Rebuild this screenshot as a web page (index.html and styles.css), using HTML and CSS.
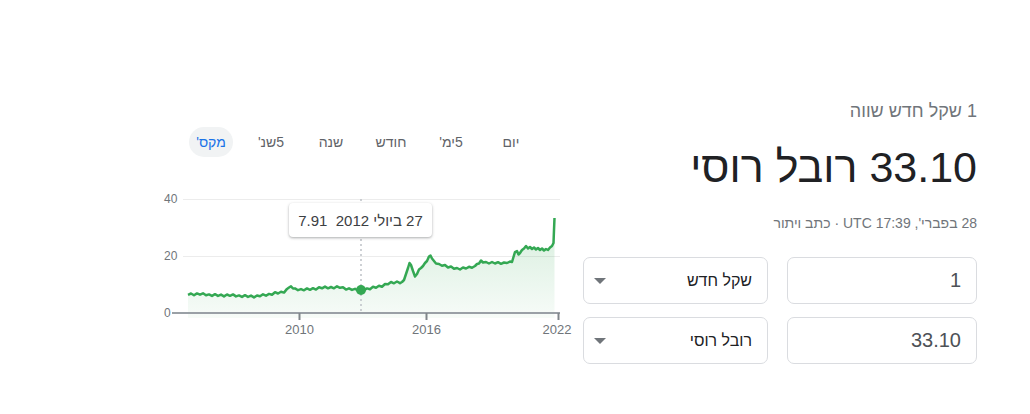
FILE: index.html
```html
<!DOCTYPE html>
<html lang="he" dir="rtl">
<head>
<meta charset="utf-8">
<title>שקל חדש לרובל רוסי</title>
<link rel="stylesheet" href="styles.css">
</head>
<body>
<div class="page">
  <section class="conv">
    <div class="conv-title">1 שקל חדש שווה</div>
    <div class="conv-result">33.10 רובל רוסי</div>
    <div class="conv-meta">28 בפברי', UTC 17:39 · <span class="disclaimer">כתב ויתור</span></div>
    <div class="conv-rows">
      <div class="conv-row">
        <div class="field num">1</div>
        <div class="field sel"><span>שקל חדש</span><span class="caret"></span></div>
      </div>
      <div class="conv-row">
        <div class="field num">33.10</div>
        <div class="field sel"><span>רובל רוסי</span><span class="caret"></span></div>
      </div>
    </div>
  </section>
  <section class="chart">
    <div class="tabs">
      <div class="tab"><span>יום</span></div>
      <div class="tab"><span>5ימ'</span></div>
      <div class="tab"><span>חודש</span></div>
      <div class="tab"><span>שנה</span></div>
      <div class="tab"><span>5שנ'</span></div>
      <div class="tab active"><span>מקס'</span></div>
    </div>
    <div class="plot">
      <svg class="plot-svg" width="405" height="150" viewBox="160 190 405 150">
        <defs>
          <linearGradient id="fillg" x1="0" y1="0" x2="0" y2="1" gradientUnits="objectBoundingBox">
            <stop offset="0" stop-color="#34a853" stop-opacity="0.2"/>
            <stop offset="1" stop-color="#34a853" stop-opacity="0.04"/>
          </linearGradient>
        </defs>
        <line x1="183" y1="199.5" x2="560" y2="199.5" class="grid"/>
        <line x1="183" y1="256.5" x2="560" y2="256.5" class="grid"/>
        <text x="164" y="203.3" class="ylab">40</text>
        <text x="164" y="260.3" class="ylab">20</text>
        <text x="164" y="317.3" class="ylab">0</text>
        <polygon class="area" fill="url(#fillg)" points="188,294.8 191,293.5 194,295.3 197,293.4 200,294.7 203,293.3 206,295.3 209,294.4 212,295.9 215,294.2 218,295.9 221,294.6 224,296.4 227,294.5 230,295.8 233,294.4 236,296.4 239,295.4 242,296.9 245,295.2 248,296.9 251,295.6 254,297.4 257,295.5 260,296.3 263,294.3 266,295.7 269,293.9 272,294.8 275,292.2 278,293.5 281,291.7 284,292.6 287,288.9 289,287.5 291,286.3 293,288.5 295,288.4 298,290.2 301,289.1 304,290.3 307,288.4 310,289.8 313,288.2 316,289.6 319,287.3 322,288.3 325,286.6 328,288.3 331,287 334,288.3 337,286.3 340,287.8 343,287.2 346,289.6 349,288.3 352,289.9 355,288.8 358,290.8 361,290 364,290.1 367,288.4 370,289.2 373,286.8 376,287.8 379,285.7 382,286.7 385,284 388,284.3 391,282 394,283.3 397,281.5 400,283.2 402,282 404,280 406,274 408,268 409.5,263 411,265 413,271 415,276.5 417,274 419,269.5 421,268 423,266 425,263 427,261 429,256.5 430.5,255.5 432,258.5 434,261 436,263.5 439,264 442,265.8 445,265 448,267.5 451,266.5 454,268.8 457,268 460,269.5 463,267.5 466,268.5 469,266.8 472,267.8 475,266 477,264 479,263.5 481,260.5 483,262.5 486,262 489,263.5 492,262 495,263.5 498,262.2 501,263.8 504,262.5 507,263 510,261.5 512,262 513.5,257 515,252 517,251 518.5,254.5 520,253 522,250 524,248.5 526,246 528,248.5 530,247 532,249 534,247.5 536,249.5 538,248 540,250 542,248.5 544,250.5 546,249 548,250 550,247.5 552,246 553.5,243 554,230 554.5,218 554.5,318 188,318"/>
        <polyline class="line" points="188,294.8 191,293.5 194,295.3 197,293.4 200,294.7 203,293.3 206,295.3 209,294.4 212,295.9 215,294.2 218,295.9 221,294.6 224,296.4 227,294.5 230,295.8 233,294.4 236,296.4 239,295.4 242,296.9 245,295.2 248,296.9 251,295.6 254,297.4 257,295.5 260,296.3 263,294.3 266,295.7 269,293.9 272,294.8 275,292.2 278,293.5 281,291.7 284,292.6 287,288.9 289,287.5 291,286.3 293,288.5 295,288.4 298,290.2 301,289.1 304,290.3 307,288.4 310,289.8 313,288.2 316,289.6 319,287.3 322,288.3 325,286.6 328,288.3 331,287 334,288.3 337,286.3 340,287.8 343,287.2 346,289.6 349,288.3 352,289.9 355,288.8 358,290.8 361,290 364,290.1 367,288.4 370,289.2 373,286.8 376,287.8 379,285.7 382,286.7 385,284 388,284.3 391,282 394,283.3 397,281.5 400,283.2 402,282 404,280 406,274 408,268 409.5,263 411,265 413,271 415,276.5 417,274 419,269.5 421,268 423,266 425,263 427,261 429,256.5 430.5,255.5 432,258.5 434,261 436,263.5 439,264 442,265.8 445,265 448,267.5 451,266.5 454,268.8 457,268 460,269.5 463,267.5 466,268.5 469,266.8 472,267.8 475,266 477,264 479,263.5 481,260.5 483,262.5 486,262 489,263.5 492,262 495,263.5 498,262.2 501,263.8 504,262.5 507,263 510,261.5 512,262 513.5,257 515,252 517,251 518.5,254.5 520,253 522,250 524,248.5 526,246 528,248.5 530,247 532,249 534,247.5 536,249.5 538,248 540,250 542,248.5 544,250.5 546,249 548,250 550,247.5 552,246 553.5,243 554,230 554.5,218"/>
        <line x1="361" y1="199" x2="361" y2="313" class="cursor"/>
        <line x1="172" y1="313" x2="560" y2="313" class="axis"/>
        <line x1="299.5" y1="313" x2="299.5" y2="320" class="tick"/>
        <line x1="426.5" y1="313" x2="426.5" y2="320" class="tick"/>
        <line x1="558.5" y1="313" x2="558.5" y2="320" class="tick"/>
        <text x="299.5" y="333.5" class="xlab">2010</text>
        <text x="426.5" y="333.5" class="xlab">2016</text>
        <text x="557" y="333.5" class="xlab">2022</text>
        <circle cx="361" cy="290" r="5" class="dot"/>
      </svg>
      <div class="tip">27 ביולי 2012  7.91</div>
    </div>
  </section>
</div>
</body>
</html>
```
FILE: styles.css
```css
body {
  margin: 0;
  background: #fff;
  font-family: Arial, "Liberation Sans", sans-serif;
}

.page {
  display: flex;
  direction: rtl;
  align-items: flex-start;
  gap: 18px;
  padding: 99px 53px 0 0;
}

.conv {
  width: 394px;
  flex: none;
}

.conv-title {
  font-size: 18px;
  line-height: 24px;
  color: #70757a;
}

.conv-result {
  font-size: 43px;
  line-height: 52px;
  color: #202124;
  margin-top: 18px;
}

.conv-meta {
  font-size: 14px;
  line-height: 20px;
  color: #70757a;
  margin-top: 20px;
}

.conv-rows {
  margin-top: 24px;
  display: flex;
  flex-direction: column;
  gap: 13px;
}

.conv-row {
  display: flex;
  gap: 19px;
}

.field {
  flex: 1;
  height: 47px;
  box-sizing: border-box;
  border: 1px solid #dadce0;
  border-radius: 7px;
  display: flex;
  align-items: center;
  padding: 0 15px;
}

.num {
  font-size: 20px;
  color: #4d5156;
}

.sel {
  font-size: 16px;
  color: #202124;
  justify-content: space-between;
  padding: 0 15px 0 10px;
}

.caret {
  width: 0;
  height: 0;
  border-left: 6px solid transparent;
  border-right: 6px solid transparent;
  border-top: 6px solid #70757a;
}

.chart {
  width: 405px;
  flex: none;
  margin-top: 28px;
}

.tabs {
  display: flex;
  padding-right: 24px;
}

.tab {
  width: 60px;
  display: flex;
  justify-content: center;
  font-size: 14px;
  color: #5f6368;
}

.tab span {
  line-height: 30px;
  padding: 0 6px;
  border-radius: 15px;
}

.tab.active span {
  background: #f1f3f4;
  color: #1a73e8;
  padding: 0 7px;
}

.plot {
  position: relative;
  margin-top: 33px;
  height: 150px;
}

.plot-svg {
  display: block;
  direction: ltr;
  overflow: visible;
  font-family: Arial, "Liberation Sans", sans-serif;
}

.grid {
  stroke: #ececec;
  stroke-width: 1;
}

.ylab {
  font-size: 12px;
  fill: #70757a;
  text-anchor: start;
}

.xlab {
  font-size: 13px;
  fill: #70757a;
  text-anchor: middle;
}

.line {
  fill: none;
  stroke: #34a853;
  stroke-width: 2.5;
  stroke-linejoin: round;
}

.axis {
  stroke: #9aa0a6;
  stroke-width: 2;
}

.tick {
  stroke: #80868b;
  stroke-width: 2;
}

.cursor {
  stroke: #bdc1c6;
  stroke-width: 1.5;
  stroke-dasharray: 2 3;
}

.dot {
  fill: #34a853;
}

.tip {
  position: absolute;
  left: 129px;
  top: 13px;
  width: 143px;
  height: 34px;
  box-sizing: border-box;
  display: flex;
  align-items: center;
  justify-content: center;
  background: #fff;
  border-radius: 4px;
  box-shadow: 0 1px 3px rgba(60, 64, 67, 0.3), 0 1px 2px rgba(60, 64, 67, 0.15);
  font-size: 15px;
  color: #3c4043;
  white-space: pre;
}
```
